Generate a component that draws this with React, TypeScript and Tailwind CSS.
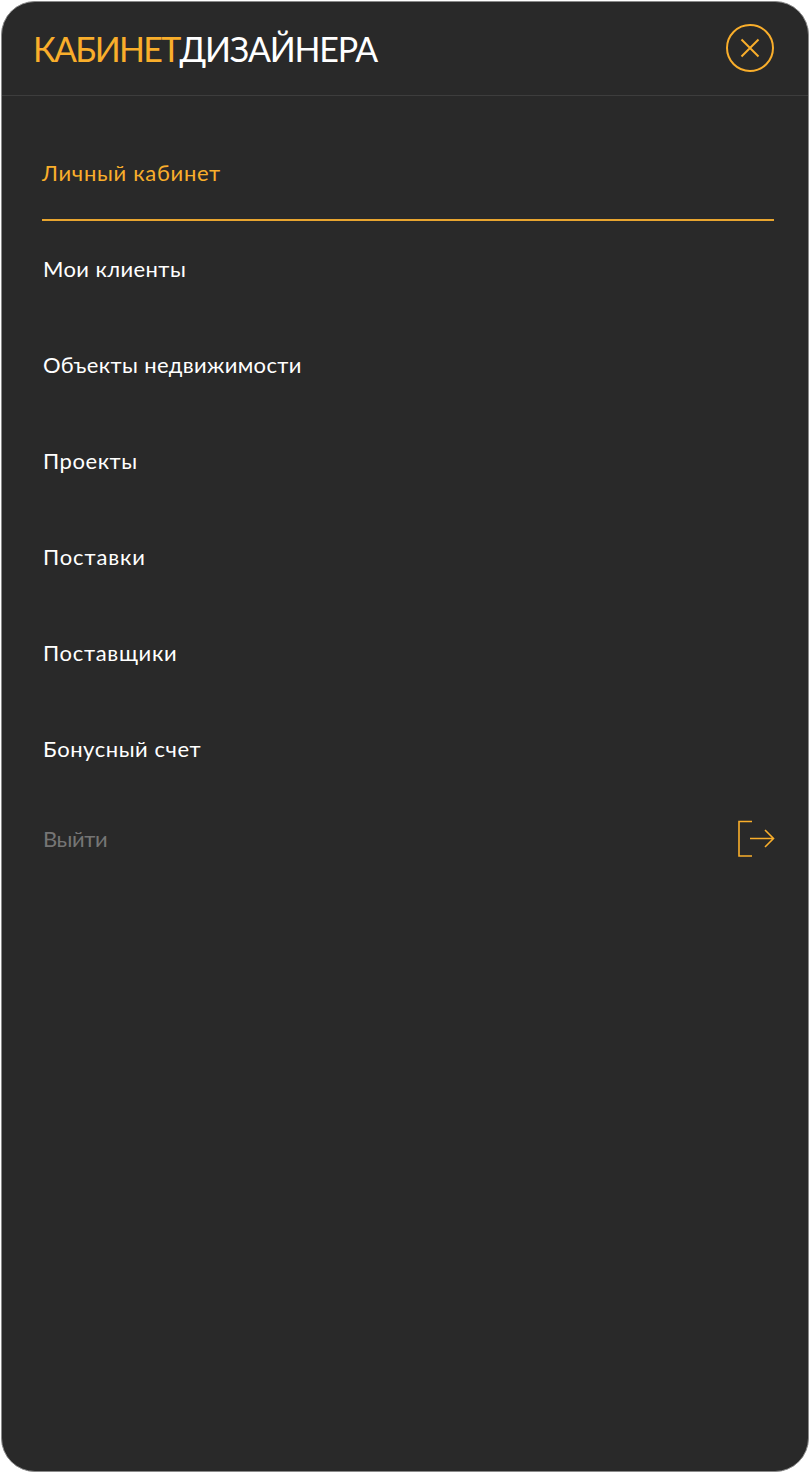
import React from 'react';

const FONT = "font-['Lato','Noto_Sans',sans-serif]";

const ITEMS = [
  { label: 'Мои клиенты', tracking: 'tracking-[0.4px]' },
  { label: 'Объекты недвижимости', tracking: 'tracking-[0.35px]' },
  { label: 'Проекты', tracking: 'tracking-[0.55px]' },
  { label: 'Поставки', tracking: 'tracking-[0.9px]' },
  { label: 'Поставщики', tracking: 'tracking-[0.7px]' },
  { label: 'Бонусный счет', tracking: 'tracking-[0.55px]' }
];

const CloseIcon = () => (
  <svg width="48" height="48" viewBox="0 0 48 48" fill="none" stroke="#f9ae2b">
    <circle cx="24" cy="24" r="23" strokeWidth="2" />
    <path d="M15.5 15.5 32.5 32.5M32.5 15.5 15.5 32.5" strokeWidth="2" />
  </svg>
);

const LogoutIcon = () => (
  <svg width="38" height="38" viewBox="0 0 38 38" fill="none" stroke="#f9ae2b" strokeWidth="1.6">
    <path d="M15 2.5H2V37H15" />
    <path d="M13 19.5H36.5M28 11 36.5 19.5 28 28" />
  </svg>
);

export default function App() {
  return (
    <div className={`h-[1473px] w-[810px] bg-white p-px ${FONT}`}>
      <div className="flex h-[1471px] w-[808px] flex-col rounded-[34px] border border-[#8a8a8a] bg-[#292929]">
        <header className="flex h-[94px] shrink-0 items-center justify-between border-b border-[#3d3d3d] pb-[2px] pl-[31px] pr-[34px]">
          <h1 className="pt-[3px] text-[34px] leading-none font-normal">
            <span className="tracking-[-1.7px] text-[#f9ae2b]">КАБИНЕТ</span>
            <span className="tracking-[-1.2px] text-white">ДИЗАЙНЕРА</span>
          </h1>
          <CloseIcon />
        </header>
        <nav className="flex flex-col pl-[40px] pr-[34px] pt-[28px] text-[22px] font-normal">
          <div className="flex h-[97px] items-center border-b-2 border-[#e8a52f] pt-[2px] tracking-[0.7px] text-[#f9ae2b]">
            Личный кабинет
          </div>
          {ITEMS.map((item, i) => (
            <div
              key={item.label}
              className={`flex h-[96px] items-center pl-px text-white ${item.tracking} ${i === 0 ? '-mt-px' : ''}`}
            >
              {item.label}
            </div>
          ))}
          <div className="-mt-[6px] flex h-[96px] items-center justify-between pl-px tracking-[-0.4px] text-[#757575]">
            Выйти
            <span className="-mr-px">
              <LogoutIcon />
            </span>
          </div>
        </nav>
      </div>
    </div>
  );
}
